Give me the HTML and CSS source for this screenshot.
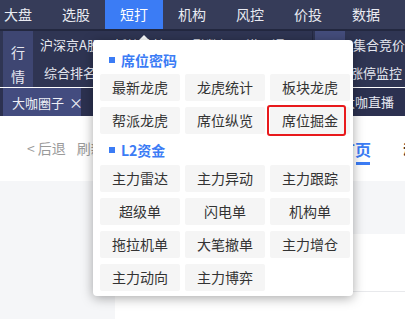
FILE: index.html
```html
<!DOCTYPE html>
<html lang="zh-CN">

<head>
  <meta charset="UTF-8">
  <meta name="viewport" content="width=device-width, initial-scale=1.0">
  <title>短打</title>
  <link rel="stylesheet" href="styles.css">
</head>

<body>

  <div class="main-nav">
    <div class="nav-item">大盘</div>
    <div class="nav-item">选股</div>
    <div class="nav-item active">短打</div>
    <div class="nav-item">机构</div>
    <div class="nav-item">风控</div>
    <div class="nav-item">价投</div>
    <div class="nav-item">数据</div>
  </div>

  <div class="sub-nav">
    <div class="side-tab">行<br>情</div>
    <div class="sub-links">
      <div class="sub-line">
        <span>沪深京A股</span><span>板块监控</span><span>两融数据</span><span>港股通</span>
      </div>
      <div class="sub-line indent">
        <span>综合排名</span><span>资金流向</span><span>热点题材</span>
      </div>
    </div>
    <div class="side-tab light"></div>
    <div class="sub-links right">
      <div class="sub-line"><span>集合竞价</span></div>
      <div class="sub-line outdent"><span>涨停监控</span></div>
    </div>
  </div>

  <div class="tab-bar">
    <div class="open-tab">大咖圈子<span class="close">×</span></div>
    <div class="tab-right">大咖直播</div>
  </div>

  <div class="content">
    <div class="toolbar">
      <div class="history"><span class="back">&lt;</span>后退<span class="refresh">刷新</span></div>
      <div class="page-tabs">
        <div class="page-tab current">首页</div>
        <div class="page-tab">动态</div>
      </div>
    </div>
    <div class="gray-band"></div>
    <div class="body-row">
      <div class="sidebar"></div>
      <div class="panel">
        <div class="panel-head"></div>
      </div>
    </div>
  </div>

  <div class="caret"></div>
  <div class="dropdown">
    <div class="group-title"><i class="dot"></i>席位密码</div>
    <div class="grid">
      <div class="cell">最新龙虎</div>
      <div class="cell">龙虎统计</div>
      <div class="cell">板块龙虎</div>
      <div class="cell">帮派龙虎</div>
      <div class="cell">席位纵览</div>
      <div class="cell">席位掘金</div>
    </div>
    <div class="group-title second"><i class="dot"></i>L2资金</div>
    <div class="grid">
      <div class="cell">主力雷达</div>
      <div class="cell">主力异动</div>
      <div class="cell">主力跟踪</div>
      <div class="cell">超级单</div>
      <div class="cell">闪电单</div>
      <div class="cell">机构单</div>
      <div class="cell">拖拉机单</div>
      <div class="cell">大笔撤单</div>
      <div class="cell">主力增仓</div>
      <div class="cell">主力动向</div>
      <div class="cell">主力博弈</div>
    </div>
  </div>
  <div class="highlight"></div>

</body>

</html>
```

FILE: styles.css
```css
body {
  margin: 0;
  width: 405px;
  height: 319px;
  overflow: hidden;
  position: relative;
  font-family: "Noto Sans CJK SC", "Noto Sans", sans-serif;
  background: #fff;
}

.main-nav {
  display: flex;
  height: 29px;
  margin-left: -11px;
  background: #363c59;
  border-bottom: 2px solid #232840;
}

.nav-item {
  width: 58px;
  line-height: 29px;
  text-align: center;
  font-size: 14px;
  color: #e9ebf2;
}

.nav-item.active {
  background: #3b7cf5;
  color: #fff;
}

.sub-nav {
  display: flex;
  height: 56px;
  background: #2f3553;
}

.side-tab {
  width: 30px;
  margin-left: 3px;
  padding-top: 9px;
  box-sizing: border-box;
  background: #3e4672;
  color: #e6e8f0;
  font-size: 14px;
  line-height: 24px;
  text-align: center;
}

.side-tab.light {
  margin-left: 2px;
  background: #444d7c;
}

.sub-links {
  width: 280px;
  padding-left: 7px;
  box-sizing: border-box;
  border-right: 1px solid #252a44;
}

.sub-links.right {
  width: auto;
  border-right: none;
  padding-left: 8px;
}

.sub-line {
  display: flex;
  gap: 14px;
  height: 28px;
  line-height: 28px;
  font-size: 13px;
  color: #e6e8f0;
  white-space: nowrap;
}

.sub-line.indent {
  padding-left: 4px;
}

.sub-line.outdent {
  margin-left: -3px;
}

.tab-bar {
  display: flex;
  justify-content: space-between;
  height: 28px;
  margin-top: 1px;
  background: #2c3150;
}

.open-tab {
  width: 78px;
  margin-left: 3px;
  padding-left: 9px;
  box-sizing: border-box;
  background: #434c7f;
  color: #eef0f6;
  font-size: 13px;
  line-height: 28px;
  white-space: nowrap;
}

.close {
  margin-left: 5px;
  font-size: 14px;
}

.tab-right {
  padding-right: 11px;
  color: #e6e8f0;
  font-size: 13px;
  line-height: 28px;
}

.toolbar {
  display: flex;
  justify-content: space-between;
  height: 65px;
}

.history {
  padding: 22px 0 0 27px;
  font-size: 14px;
  color: #9a9a9a;
  white-space: nowrap;
}

.back {
  margin-right: 3px;
}

.refresh {
  margin-left: 11px;
}

.page-tabs {
  display: flex;
  gap: 32px;
  margin-right: -30px;
  padding-top: 21px;
}

.page-tab {
  height: 28px;
  font-size: 16px;
  font-weight: bold;
  color: #333;
  white-space: nowrap;
}

.page-tab.current {
  color: #3b7cf5;
  background: linear-gradient(#3b7cf5, #3b7cf5) no-repeat right 1px bottom / 14px 3px;
}

.gray-band {
  height: 53px;
  background: #f5f6f8;
}

.body-row {
  display: flex;
  height: 90px;
}

.sidebar {
  width: 115px;
  background: #f5f6f8;
}

.panel {
  flex: 1;
}

.panel-head {
  height: 57px;
  border-bottom: 1px solid #e8e9ec;
}

.caret {
  position: absolute;
  left: 139px;
  top: 35px;
  border-left: 5px solid transparent;
  border-right: 5px solid transparent;
  border-bottom: 5px solid #fff;
}

.dropdown {
  position: absolute;
  left: 93px;
  top: 40px;
  width: 260px;
  padding: 10px 3px 5px 7px;
  box-sizing: border-box;
  background: #fff;
  border-radius: 4px;
  box-shadow: 0 2px 12px rgba(0, 0, 0, 0.35);
}

.group-title {
  display: flex;
  align-items: center;
  gap: 6px;
  margin: 0 0 4px 9px;
  line-height: 20px;
  font-size: 14px;
  font-weight: bold;
  color: #3b7cf5;
}

.group-title.second {
  margin-top: 6px;
  margin-bottom: 5px;
}

.dot {
  width: 6px;
  height: 6px;
  background: #3b7cf5;
}

.grid {
  display: grid;
  grid-template-columns: repeat(3, 80px);
  column-gap: 5px;
  row-gap: 6px;
}

.cell {
  height: 27px;
  line-height: 27px;
  text-align: center;
  font-size: 14px;
  color: #333;
  background: #f5f5f5;
  border-radius: 2px;
}

.highlight {
  position: absolute;
  left: 267px;
  top: 105px;
  width: 79px;
  height: 31px;
  box-sizing: border-box;
  border: 2px solid #e8191c;
  border-radius: 3px;
}
```
